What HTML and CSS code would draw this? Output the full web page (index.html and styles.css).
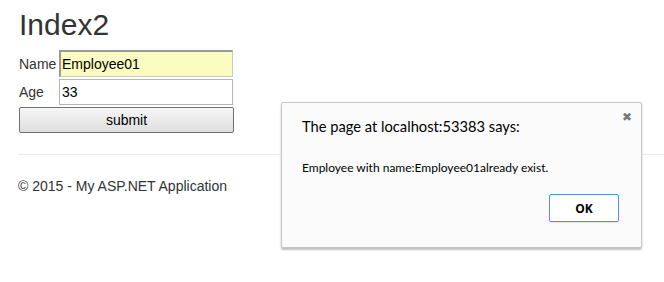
FILE: index.html
```html
<!DOCTYPE html>
<html>
<head>
  <title>Index2</title>
  <meta name="viewport" content="width=device-width, initial-scale=1.0">
  <link rel="stylesheet" href="styles.css">
</head>
<body>
  <div class="container">
    <h2>Index2</h2>

    <form class="emp-form">
      <div class="row first">
        <label>Name</label>
        <input type="text" class="field focused" value="Employee01">
      </div>
      <div class="row">
        <label>Age</label>
        <input type="text" class="field" value="33">
      </div>
      <button type="button" class="submit">submit</button>
    </form>

    <hr>
    <footer>
      <p>&copy; 2015 - My ASP.NET Application</p>
    </footer>
  </div>

  <!-- alert() box -->
  <div class="alert-box">
    <span class="close">&#x2716;</span>
    <div class="alert-title">The page at localhost:53383 says:</div>
    <div class="alert-msg">Employee with name:Employee01already exist.</div>
    <div class="alert-actions">
      <button type="button" class="ok">OK</button>
    </div>
  </div>
</body>
</html>
```

FILE: styles.css
```css
body {
  margin: 0;
  font-family: "Liberation Sans", Arial, sans-serif;
  font-size: 14px;
  color: #333;
  background-color: #fff;
  overflow: hidden;
}
.container {
  padding: 0 0 0 18px;
}
h2 {
  margin: 0;
  padding: 8px 0 0 1px;
  font-size: 30px;
  font-weight: 500;
  line-height: 33px;
}
.emp-form {
  margin-top: 9px;
  padding-left: 1px;
  width: 216px;
}
.row {
  display: flex;
  align-items: center;
  height: 26px;
  margin-bottom: 2px;
}
.row.first {
  height: 27px;
}
.row label {
  width: 40px;
}
.field {
  box-sizing: border-box;
  width: 174px;
  height: 26px;
  margin: 0;
  padding: 0 2px;
  border: 1px solid #b5b5b5;
  font-family: "Liberation Sans", Arial, sans-serif;
  font-size: 14px;
  color: #000;
  background: #fff;
}
.field.focused {
  height: 27px;
  background: #fafcc2;
  border-top: 2px solid #9a9a9a;
  border-left: 2px solid #9a9a9a;
  border-right: 1px solid #c8c8c8;
  border-bottom: 1px solid #c8c8c8;
  padding-left: 1px;
}
.submit {
  display: block;
  box-sizing: border-box;
  width: 215px;
  height: 26px;
  margin: 1px 0 0;
  border: 1px solid #707070;
  border-radius: 2px;
  background: linear-gradient(#f6f6f6, #dedede);
  font-family: "Liberation Sans", Arial, sans-serif;
  font-size: 14px;
  color: #000;
}
hr {
  margin: 21px 0 0;
  border: 0;
  border-top: 1px solid #eee;
}
footer p {
  margin: 23px 0 0;
}

.alert-box {
  position: absolute;
  left: 281px;
  top: 102px;
  box-sizing: border-box;
  width: 361px;
  height: 146px;
  padding: 12px 20px 0 20px;
  background: #fbfbfb;
  border: 1px solid #c6c6c6;
  border-radius: 2px;
  box-shadow: 0 2px 2px rgba(0, 0, 0, 0.25);
  font-family: Lato, "Open Sans", sans-serif;
  color: #000;
}
.close {
  position: absolute;
  right: 9px;
  top: 7px;
  font-family: "DejaVu Sans", sans-serif;
  font-size: 12px;
  color: #777;
}
.alert-title {
  font-size: 14.7px;
  line-height: 22px;
}
.alert-msg {
  margin-top: 22px;
  font-size: 12px;
  line-height: 18px;
}
.alert-actions {
  display: flex;
  justify-content: flex-end;
  margin-top: 17px;
  padding-right: 2px;
}
.ok {
  box-sizing: border-box;
  width: 70px;
  height: 28px;
  border: 1px solid #4d90fe;
  border-radius: 2px;
  background: #fff;
  box-shadow: 0 1px 1px rgba(0, 0, 0, 0.1);
  font-family: "Open Sans", "Noto Sans", sans-serif;
  font-size: 12px;
  font-weight: bold;
  color: #000;
}
```
